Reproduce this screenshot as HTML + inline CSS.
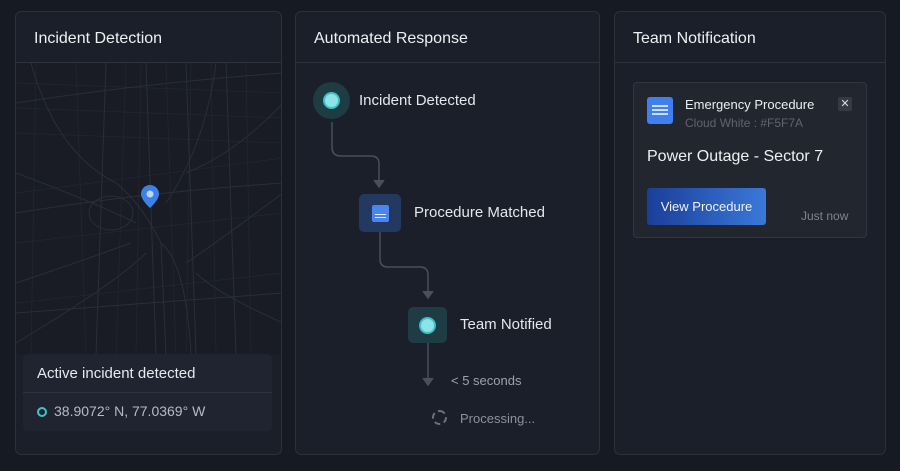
<!DOCTYPE html>
<html><head><style>
*{margin:0;padding:0;box-sizing:border-box}
body{width:900px;height:471px;background:#161a22;font-family:"Liberation Sans",sans-serif;position:relative;overflow:hidden;color:#e8eaee}
.p{position:absolute;top:11px;height:444px;background:#1b1f29;border:1px solid #2b303b;border-radius:6px;overflow:hidden}
.h{height:51px;border-bottom:1px solid #2d323d;font-size:16px;padding:18px 0 0 18px;color:#eef0f3}
.t{position:absolute;font-size:15px;color:#e4e7ec}
</style></head><body>
<div class="p" style="left:15px;width:267px">
 <div class="h">Incident Detection</div>
 <svg style="position:absolute;left:0;top:51px" width="267" height="292" viewBox="0 0 267 292">
  <rect width="267" height="292" fill="#191c24"/>
  <g stroke="#23272f" stroke-width="0.7" fill="none">
   <path d="M0 20 L267 30 M0 70 L267 80 M0 130 L267 95 M0 180 L267 150 M60 0 L70 292 M110 0 L100 292 M150 0 L160 292 M195 0 L200 292 M230 0 L235 292 M0 45 L267 55 M0 240 L267 210 M20 0 L15 292 M125 0 L120 292 M175 0 L170 292"/>
  </g>
  <g stroke="#2a2e37" stroke-width="1" fill="none">
   <path d="M15 0 Q40 90 100 120 Q125 140 145 180 L150 292"/>
   <path d="M145 180 Q170 200 175 292"/>
   <path d="M0 40 Q130 20 267 10 M0 150 Q120 130 267 120 M0 250 L267 230"/>
   <path d="M90 0 L80 292 M130 0 L140 292 M170 0 L180 292 M210 0 L220 292"/>
   <path d="M0 110 Q80 140 120 160 M267 130 Q200 180 170 200 M0 220 Q60 200 115 180 M267 260 Q200 230 180 210"/>
   <ellipse cx="95" cy="150" rx="22" ry="17"/>
   <path d="M0 280 Q100 220 130 190 M200 0 Q190 80 150 140 M267 40 Q220 90 170 110"/>
  </g>
  <path d="M134 122 c-5 0 -9 4 -9 9 c0 6 9 14 9 14 c0 0 9 -8 9 -14 c0 -5 -4 -9 -9 -9z" fill="#3b82e8"/>
  <circle cx="134" cy="131" r="3.5" fill="#bcd6ff"/>
 </svg>
 <div style="position:absolute;left:7px;top:342px;width:249px;height:77px;background:#202430;border-radius:5px">
  <div style="height:39px;border-bottom:1px solid #2e333e;padding:11px 0 0 14px;font-size:15px;color:#e6e9ee">Active incident detected</div>
  <div style="padding:10px 0 0 14px;font-size:14px;color:#b6bac3"><span style="display:inline-block;width:10px;height:10px;border:2.5px solid #3dc4c8;border-radius:50%;margin-right:7px;vertical-align:-1px"></span>38.9072° N, 77.0369° W</div>
 </div>
</div>
<div class="p" style="left:295px;width:305px">
 <div class="h">Automated Response</div>
 <svg style="position:absolute;left:0;top:0" width="305" height="444" fill="none" stroke="#4a4f5a" stroke-width="1.5">
  <path d="M36 110 L36 135 Q36 144 45 144 L75 144 Q83 144 83 152 L83 172"/><path d="M78 168 L83 175 L88 168" fill="#4a4f5a"/>
  <path d="M84 220 L84 247 Q84 255 92 255 L124 255 Q132 255 132 263 L132 283"/><path d="M127 279 L132 286 L137 279" fill="#4a4f5a"/>
  <path d="M132 330 L132 370"/><path d="M127 366 L132 373 L137 366" fill="#4a4f5a"/>
 </svg>
 <div style="position:absolute;left:17px;top:70px;width:37px;height:37px;border-radius:50%;background:#1f3c44"></div>
 <div style="position:absolute;left:29px;top:82px;width:13px;height:13px;border-radius:50%;background:#8ee3e6;box-shadow:0 0 0 2px #3cc0c6"></div>
 <div class="t" style="left:63px;top:80px">Incident Detected</div>
 <div style="position:absolute;left:63px;top:182px;width:42px;height:38px;border-radius:5px;background:#243960"></div>
 <div style="position:absolute;left:76px;top:193px;width:17px;height:17px;border-radius:2px;background:#4a86ee"></div>
 <div style="position:absolute;left:79px;top:202px;width:11px;height:1px;background:#dfe9ff;box-shadow:0 3px 0 #dfe9ff"></div>
 <div class="t" style="left:118px;top:192px">Procedure Matched</div>
 <div style="position:absolute;left:112px;top:295px;width:39px;height:36px;border-radius:5px;background:#1f3c44"></div>
 <div style="position:absolute;left:125px;top:307px;width:13px;height:13px;border-radius:50%;background:#8ee3e6;box-shadow:0 0 0 2px #3cc0c6"></div>
 <div class="t" style="left:164px;top:304px">Team Notified</div>
 <div style="position:absolute;left:155px;top:361px;font-size:13px;color:#9ca1ab">&lt; 5 seconds</div>
 <div style="position:absolute;left:136px;top:398px;width:15px;height:15px;border:2px dashed #6b707a;border-radius:50%"></div>
 <div style="position:absolute;left:164px;top:399px;font-size:13px;color:#8c919a">Processing...</div>
</div>
<div class="p" style="left:614px;width:272px">
 <div class="h">Team Notification</div>
 <div style="position:absolute;left:18px;top:70px;width:234px;height:156px;background:#22262f;border:1px solid #30353f;border-radius:4px">
  <div style="position:absolute;left:13px;top:14px;width:26px;height:27px;background:#3f7ff0;border-radius:3px"></div>
  <div style="position:absolute;left:18px;top:22px;width:16px;height:2px;background:#cfe0ff;box-shadow:0 4px 0 #cfe0ff,0 8px 0 #cfe0ff"></div>
  <div style="position:absolute;left:51px;top:14px;font-size:13px;color:#eceef2">Emergency Procedure</div>
  <div style="position:absolute;left:51px;top:33px;font-size:12px;color:#5f646e">Cloud White : #F5F7A</div>
  <div style="position:absolute;left:204px;top:14px;width:14px;height:14px;background:#353a44;border-radius:2px;font-size:11px;text-align:center;line-height:14px;color:#ddd">✕</div>
  <div style="position:absolute;left:13px;top:65px;font-size:16px;color:#eef0f3">Power Outage - Sector 7</div>
  <div style="position:absolute;left:13px;top:105px;width:119px;height:37px;border-radius:3px;background:linear-gradient(90deg,#1a3f9a,#3b78d8);font-size:13px;color:#eef2ff;text-align:center;line-height:37px">View Procedure</div>
  <div style="position:absolute;left:167px;top:126px;font-size:12px;color:#7f848d">Just now</div>
 </div>
</div>
</body></html>
